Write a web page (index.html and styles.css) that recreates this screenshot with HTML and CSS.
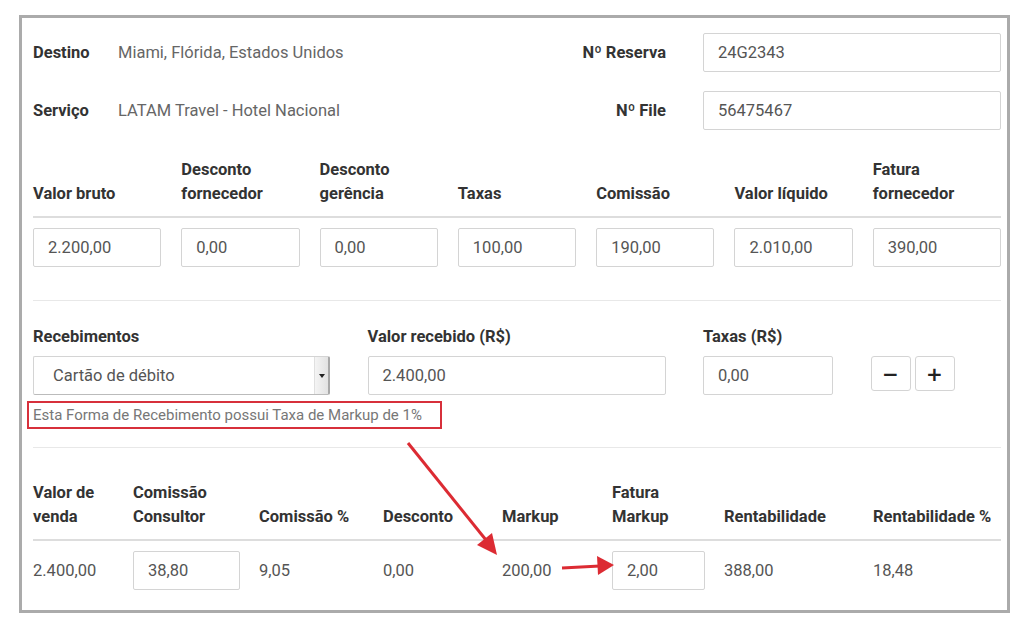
FILE: index.html
```html
<!DOCTYPE html>
<html lang="pt-BR">
<head>
    <meta charset="UTF-8">
    <meta name="viewport" content="width=device-width, initial-scale=1.0">
    <title>Detalhes do serviço</title>
    <link rel="stylesheet" href="styles.css">
</head>
<body>

    <div class="frame">

        <!-- dados da reserva -->
        <div class="info-row">
            <span class="info-label">Destino</span>
            <span class="info-value">Miami, Flórida, Estados Unidos</span>
            <span class="info-key">Nº Reserva</span>
            <div class="field info-field">24G2343</div>
        </div>
        <div class="info-row">
            <span class="info-label">Serviço</span>
            <span class="info-value">LATAM Travel - Hotel Nacional</span>
            <span class="info-key">Nº File</span>
            <div class="field info-field">56475467</div>
        </div>

        <!-- valores do fornecedor -->
        <table class="values-table">
            <thead>
                <tr>
                    <th>Valor bruto</th>
                    <th>Desconto<br>fornecedor</th>
                    <th>Desconto<br>gerência</th>
                    <th>Taxas</th>
                    <th>Comissão</th>
                    <th>Valor líquido</th>
                    <th>Fatura<br>fornecedor</th>
                </tr>
            </thead>
            <tbody>
                <tr>
                    <td><div class="field">2.200,00</div></td>
                    <td><div class="field">0,00</div></td>
                    <td><div class="field">0,00</div></td>
                    <td><div class="field">100,00</div></td>
                    <td><div class="field">190,00</div></td>
                    <td><div class="field">2.010,00</div></td>
                    <td><div class="field">390,00</div></td>
                </tr>
            </tbody>
        </table>

        <hr class="divider">

        <!-- recebimentos -->
        <div class="payment">
            <div class="payment-grid">
                <label class="col-label">Recebimentos</label>
                <label class="col-label">Valor recebido (R$)</label>
                <label class="col-label">Taxas (R$)</label>
                <span></span>

                <div class="field select-field">
                    Cartão de débito
                    <span class="select-btn"><span class="caret"></span></span>
                </div>
                <div class="field">2.400,00</div>
                <div class="field">0,00</div>
                <div class="btn-group">
                    <button class="btn">&minus;</button>
                    <button class="btn">+</button>
                </div>
            </div>
            <div class="hint">Esta Forma de Recebimento possui Taxa de Markup de 1%</div>
        </div>

        <hr class="divider divider-tight">

        <!-- resultado -->
        <div class="result-grid">
            <div class="rh">Valor de<br>venda</div>
            <div class="rh">Comissão<br>Consultor</div>
            <div class="rh">Comissão %</div>
            <div class="rh">Desconto</div>
            <div class="rh">Markup</div>
            <div class="rh">Fatura<br>Markup</div>
            <div class="rh">Rentabilidade</div>
            <div class="rh">Rentabilidade %</div>

            <div class="rc">2.400,00</div>
            <div class="rc"><div class="field">38,80</div></div>
            <div class="rc">9,05</div>
            <div class="rc">0,00</div>
            <div class="rc">200,00</div>
            <div class="rc"><div class="field">2,00</div></div>
            <div class="rc">388,00</div>
            <div class="rc">18,48</div>
        </div>

    </div>

    <!-- setas de anotação -->
    <svg class="annotations" width="1024" height="628" viewBox="0 0 1024 628">
        <line x1="408" y1="443" x2="486" y2="540" stroke="#dc2b33" stroke-width="3"/>
        <polygon points="497,555 477,545 492,533" fill="#dc2b33"/>
        <line x1="562" y1="568" x2="600" y2="566" stroke="#dc2b33" stroke-width="3"/>
        <polygon points="614,565 597,556 598,575" fill="#dc2b33"/>
    </svg>

</body>
</html>
```

FILE: styles.css
```css
* {
    margin: 0;
    padding: 0;
    box-sizing: border-box;
}

body {
    font-family: Roboto, 'Liberation Sans', sans-serif;
    font-size: 16.5px;
    line-height: 24px;
    color: #333;
    background: #fff;
    position: relative;
    width: 1024px;
    height: 628px;
    overflow: hidden;
}

.frame {
    margin: 15px 0 0 19px;
    width: 991px;
    height: 598px;
    border: 3px solid #ababab;
    padding: 15px 6px 0 11px;
    background: #fff;
}


/* campos */
.field {
    height: 39px;
    border: 1px solid #d4d4d4;
    border-radius: 2px;
    padding: 0 14px;
    display: flex;
    align-items: center;
    color: #555;
    background: #fff;
}


/* topo */
.info-row {
    display: flex;
    align-items: center;
    height: 39px;
    margin-bottom: 19px;
}

.info-label {
    width: 85px;
    font-weight: bold;
}

.info-value {
    flex: 1;
    color: #666;
}

.info-key {
    font-weight: bold;
    margin-right: 37px;
}

.info-field {
    width: 298px;
}


/* tabela de valores */
.values-table {
    width: 100%;
    table-layout: fixed;
    border-collapse: collapse;
    margin-top: 28px;
}

.values-table th {
    text-align: left;
    vertical-align: bottom;
    padding: 0 10px 10px;
    border-bottom: 2px solid #ddd;
}

.values-table td {
    padding: 10px 10px 0;
}

.values-table th:first-child,
.values-table td:first-child {
    padding-left: 0;
}

.values-table th:last-child,
.values-table td:last-child {
    padding-right: 0;
}

.divider {
    border: none;
    border-top: 1px solid #e8e8e8;
    margin: 33px 0 0;
}

.divider-tight {
    margin-top: 0;
}


/* recebimentos */
.payment {
    padding-top: 24px;
    padding-bottom: 18px;
}

.payment-grid {
    display: grid;
    grid-template-columns: 297px 298px 130px auto;
    column-gap: 37.5px;
    row-gap: 7px;
}

.col-label {
    font-weight: bold;
}

.select-field {
    position: relative;
    padding-left: 19px;
    border-right: 2px solid #a8a8a8;
    border-bottom-color: #bbb;
}

.select-btn {
    position: absolute;
    top: 0;
    right: 0;
    bottom: 0;
    width: 14px;
    background: linear-gradient(to right, #f4f4f4, #e2e2e2);
    border-left: 1px solid #e0e0e0;
    display: flex;
    align-items: center;
    justify-content: center;
}

.caret {
    width: 0;
    height: 0;
    border-left: 3px solid transparent;
    border-right: 3px solid transparent;
    border-top: 4px solid #222;
}

.btn-group {
    display: flex;
    gap: 4px;
}

.btn {
    width: 40px;
    height: 35px;
    border: 1px solid #d4d4d4;
    border-radius: 3px;
    background: #fff;
    font-family: 'DejaVu Sans', sans-serif;
    font-size: 20px;
    font-weight: bold;
    color: #222;
}

.hint {
    width: fit-content;
    margin-top: 6px;
    margin-left: -6px;
    padding: 2px 18px 2px 4px;
    border: 2px solid #d7303b;
    font-size: 15px;
    line-height: 20px;
    color: #777;
}


/* resultado */
.result-grid {
    display: grid;
    grid-template-columns: 100px 126px 124px 119px 110px 112px 149px 128px;
    margin-top: 33px;
}

.rh {
    font-weight: bold;
    display: flex;
    align-items: flex-end;
    padding-bottom: 10px;
    border-bottom: 2px solid #ddd;
}

.rc {
    margin-top: 10px;
    height: 39px;
    display: flex;
    align-items: center;
    padding-right: 19px;
    color: #555;
}

.rc .field {
    width: 100%;
}


/* setas */
.annotations {
    position: absolute;
    top: 0;
    left: 0;
    pointer-events: none;
}
```
